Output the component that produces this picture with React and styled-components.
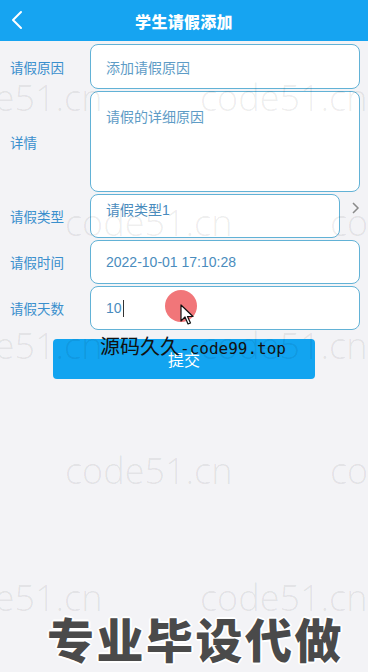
import React from "react";
import styled, { createGlobalStyle } from "styled-components";

const Global = createGlobalStyle`
  html, body { margin: 0; padding: 0; }
  body {
    width: 368px;
    height: 672px;
    overflow: hidden;
    background: #f3f3f6;
    font-family: "Liberation Sans", "Noto Sans CJK SC", sans-serif;
  }
`;

const Page = styled.div`
  position: relative;
  width: 368px;
  height: 672px;
  overflow: hidden;
  background: #f3f3f6;
  display: flex;
  flex-direction: column;
`;

const Header = styled.header`
  height: 41px;
  background: #16a4f1;
  display: flex;
  align-items: center;
  justify-content: center;
  position: relative;
  flex-shrink: 0;
`;

const BackButton = styled.div`
  position: absolute;
  left: 8px;
  top: 10px;
  width: 18px;
  height: 20px;
  display: flex;
  align-items: center;
  justify-content: center;
`;

const Title = styled.h1`
  margin: 0;
  font-size: 16px;
  font-weight: 900;
  color: #ffffff;
  font-family: "Noto Sans CJK SC", sans-serif;
  letter-spacing: 0.3px;
`;

const Form = styled.div`
  display: flex;
  flex-direction: column;
  gap: 2px;
  padding-top: 3px;
`;

const Row = styled.div`
  display: flex;
  align-items: center;
  height: ${(p) => p.$h}px;
`;

const Label = styled.div`
  width: 90px;
  padding-left: 10px;
  box-sizing: border-box;
  font-size: 13.5px;
  color: #3a8fcd;
  font-family: "Noto Sans CJK SC", sans-serif;
  flex-shrink: 0;
`;

const Field = styled.div`
  flex: 1;
  height: 100%;
  box-sizing: border-box;
  margin-right: ${(p) => p.$mr}px;
  background: #ffffff;
  border: 1.5px solid #62b2d6;
  border-radius: 8px;
  display: flex;
  align-items: ${(p) => (p.$top ? "flex-start" : "center")};
  padding: ${(p) => p.$pad};
  font-size: 14px;
  color: ${(p) => (p.$placeholder ? "#5e9cc6" : "#4a8cbd")};
  font-family: "Liberation Sans", "Noto Sans CJK SC", sans-serif;
  position: relative;
`;

const Caret = styled.span`
  display: inline-block;
  width: 1px;
  height: 17px;
  background: #333;
  margin-left: 1px;
  vertical-align: middle;
`;

const Chevron = styled.div`
  position: absolute;
  right: -22px;
  top: 6px;
  width: 10px;
  height: 14px;
`;

const SubmitButton = styled.button`
  align-self: center;
  margin-top: 9px;
  width: 262px;
  height: 40px;
  border: none;
  border-radius: 4px;
  background: #12a4f0;
  color: #ffffff;
  font-size: 16px;
  font-family: "Noto Sans CJK SC", sans-serif;
  padding: 0;
`;

const WatermarkLayer = styled.div`
  position: absolute;
  inset: 0;
  pointer-events: none;
`;

const Watermark = styled.span`
  position: absolute;
  font-family: "Open Sans", "DejaVu Sans", sans-serif;
  font-weight: 300;
  font-size: 36px;
  line-height: 1;
  color: rgba(0, 0, 0, 0.08);
  white-space: nowrap;
`;

const Promo = styled.div`
  position: absolute;
  left: 100px;
  top: 334px;
  color: #111;
  white-space: nowrap;
  line-height: 24px;
`;

const PromoCjk = styled.span`
  font-family: "Noto Sans CJK SC", sans-serif;
  font-size: 20px;
`;

const PromoMono = styled.span`
  font-family: "DejaVu Sans Mono", "Liberation Mono", monospace;
  font-size: 16px;
`;

const Banner = styled.div`
  position: absolute;
  left: 47px;
  top: 608px;
  font-family: "Noto Sans CJK SC", sans-serif;
  font-weight: 900;
  font-size: 47px;
  letter-spacing: 2.5px;
  line-height: 60px;
  color: #4a4a4a;
  white-space: nowrap;
  text-shadow: 1px 1px 0 #fff, -1px -1px 0 #fff, 1px -1px 0 #fff, -1px 1px 0 #fff,
    0 2px 0 #fff, 2px 0 0 #fff, 0 -2px 0 #fff, -2px 0 0 #fff;
`;

const ClickDot = styled.div`
  position: absolute;
  left: 165px;
  top: 290px;
  width: 32px;
  height: 32px;
  border-radius: 50%;
  background: rgba(238, 88, 92, 0.82);
`;

const Pointer = styled.svg`
  position: absolute;
  left: 180px;
  top: 304px;
`;

const marks = [
  { x: -65, y: 80 }, { x: 200, y: 80 },
  { x: 65, y: 205 }, { x: 330, y: 205 },
  { x: -65, y: 328 }, { x: 200, y: 328 },
  { x: 65, y: 453 }, { x: 330, y: 453 },
  { x: -65, y: 580 }, { x: 200, y: 580 },
];

export default function App() {
  return (
    <>
      <Global />
      <Page>
        <Header>
          <BackButton>
            <svg width="12" height="20" viewBox="0 0 12 20">
              <polyline points="10,2 2,10 10,18" fill="none" stroke="#fff" strokeWidth="2" strokeLinecap="round" strokeLinejoin="round" />
            </svg>
          </BackButton>
          <Title>学生请假添加</Title>
        </Header>
        <Form>
          <Row $h={45}>
            <Label>请假原因</Label>
            <Field $mr={8} $pad="0 0 0 15px" $placeholder>添加请假原因</Field>
          </Row>
          <Row $h={101}>
            <Label>详情</Label>
            <Field $mr={8} $pad="14px 0 0 15px" $top $placeholder>请假的详细原因</Field>
          </Row>
          <Row $h={44}>
            <Label>请假类型</Label>
            <Field $mr={28} $pad="4px 0 0 15px" $top>
              请假类型1
              <Chevron>
                <svg width="10" height="14" viewBox="0 0 10 14">
                  <polyline points="2,2 7,7 2,12" fill="none" stroke="#8a8a8a" strokeWidth="1.5" />
                </svg>
              </Chevron>
            </Field>
          </Row>
          <Row $h={44}>
            <Label>请假时间</Label>
            <Field $mr={8} $pad="0 0 0 15px">2022-10-01 17:10:28</Field>
          </Row>
          <Row $h={44}>
            <Label>请假天数</Label>
            <Field $mr={8} $pad="0 0 0 15px">
              10<Caret />
            </Field>
          </Row>
        </Form>
        <SubmitButton>提交</SubmitButton>

        <ClickDot />
        <Pointer width="14" height="22" viewBox="0 0 14 22">
          <path d="M1 1 L1 17 L5 13 L8 20 L10.5 19 L7.5 12.5 L13 12.5 Z" fill="#fff" stroke="#111" strokeWidth="1.2" strokeLinejoin="round" />
        </Pointer>

        <WatermarkLayer>
          {marks.map((m, i) => (
            <Watermark key={i} style={{ left: m.x, top: m.y }}>code51.cn</Watermark>
          ))}
        </WatermarkLayer>

        <Promo>
          <PromoCjk>源码久久</PromoCjk>
          <PromoMono>-code99.top</PromoMono>
        </Promo>
        <Banner>专业毕设代做</Banner>
      </Page>
    </>
  );
}
